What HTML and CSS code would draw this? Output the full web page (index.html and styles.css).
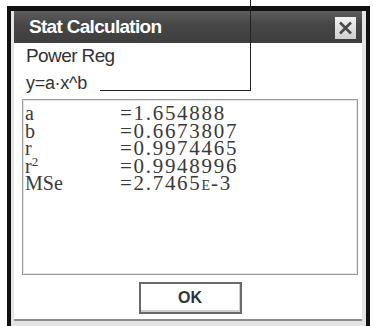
FILE: index.html
```html
<!DOCTYPE html>
<html lang="en">
<head>
    <meta charset="UTF-8">
    <meta name="viewport" content="width=device-width, initial-scale=1.0">
    <title>Stat Calculation</title>
    <link rel="stylesheet" href="styles.css">
</head>
<body>
    <div class="frame">
        <div class="titlebar">
            <span class="title">Stat Calculation</span>
            <span class="close">
                <svg width="21" height="22" viewBox="0 0 21 22">
                    <path d="M5 5.5 L16 16.5 M16 5.5 L5 16.5" stroke="#4a4a4a" stroke-width="2.6" fill="none"/>
                </svg>
            </span>
        </div>
        <div class="content">
            <p class="heading">Power Reg</p>
            <p class="formula">y=a·x^b</p>
            <div class="results">
                <div class="row"><span class="name">a</span><span class="val">=1.654888</span></div>
                <div class="row"><span class="name">b</span><span class="val">=0.6673807</span></div>
                <div class="row"><span class="name">r</span><span class="val">=0.9974465</span></div>
                <div class="row"><span class="name">r<sup>2</sup></span><span class="val">=0.9948996</span></div>
                <div class="row"><span class="name">MSe</span><span class="val">=2.7465<span class="exp">E</span>-3</span></div>
            </div>
            <div class="actions">
                <button class="ok" type="button">OK</button>
            </div>
        </div>
    </div>
    <!-- callout line pointing at the formula -->
    <div class="leader"></div>
</body>
</html>
```

FILE: styles.css
```css
body{
    margin: 0;
    background: #fff;
    font-family: "Liberation Sans", Arial, sans-serif;
}
.frame{
    margin: 6px 0 0 7px;
    width: 348px;
    height: 315px;
    padding: 0 4px 0 3px;
    border: 4px solid #111;
    border-top-width: 5px;
    border-bottom: 0;
    background: #e4e4e4;
}
.titlebar{
    height: 32px;
    display: flex;
    align-items: center;
    justify-content: space-between;
    padding: 0 6px 0 15px;
    background: linear-gradient(#5e5e5e, #474747 40%, #3e3e3e);
}
.title{
    color: #fff;
    font-size: 19px;
    font-weight: bold;
    letter-spacing: -0.7px;
}
.close{
    display: block;
    width: 21px;
    height: 22px;
    margin-top: 2px;
    background: linear-gradient(#f2f2f2, #cfcfcf);
}
.close svg{
    display: block;
}
.content{
    box-sizing: border-box;
    height: 278px;
    padding: 2px 4px 0 8px;
    background: #fff;
    border-bottom: 2px solid #8c8c8c;
}
.heading,
.formula{
    margin: 0;
    padding-left: 4px;
    color: #333;
}
.heading{
    font-size: 19px;
    line-height: 22px;
    letter-spacing: -0.6px;
}
.formula{
    margin-top: 6px;
    font-size: 18px;
    line-height: 21px;
    letter-spacing: -0.3px;
}
.results{
    box-sizing: border-box;
    height: 176px;
    margin-top: 5px;
    padding: 5px 0 0 2px;
    border: 1px solid #9a9a9a;
    box-shadow: inset 0 0 0 1px #e6e6e6;
    font-family: "Liberation Serif", "Times New Roman", serif;
    color: #3a3a3a;
}
.row{
    display: grid;
    grid-template-columns: 95px 1fr;
    font-size: 20px;
    line-height: 17.5px;
}
.name sup{
    font-size: 13px;
    line-height: 0;
    vertical-align: 7px;
}
.val{
    font-size: 21px;
    letter-spacing: 1.7px;
}
.val .exp{
    font-size: 14px;
    letter-spacing: 1px;
}
.actions{
    display: flex;
    justify-content: center;
    margin-top: 7px;
}
.ok{
    width: 103px;
    height: 32px;
    padding: 0;
    border: 2px solid #6a6a6a;
    background: #fff;
    box-shadow: inset -1px -2px 0 #d0d0d0;
    font-family: "Liberation Sans", Arial, sans-serif;
    font-size: 16px;
    font-weight: bold;
    color: #333;
}
.leader{
    position: absolute;
    left: 100px;
    top: 0;
    width: 150px;
    height: 90px;
    border-right: 1px solid #222;
    border-bottom: 1px solid #222;
}
```
